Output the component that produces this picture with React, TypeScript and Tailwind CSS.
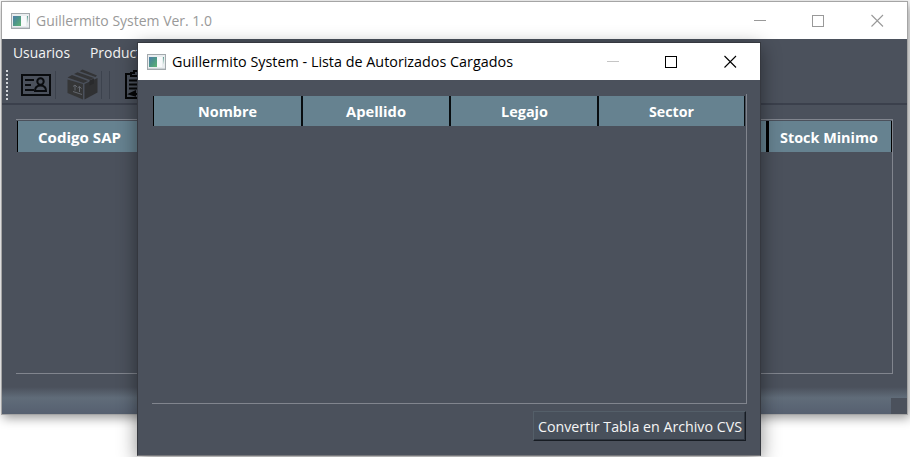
import type { ReactNode } from "react";

function Fit({ w, children, className = "" }: { w: number; children: string; className?: string }) {
  return (
    <svg width={w} height={24} className={"block shrink-0 overflow-visible " + className}>
      <text x={0} y={17} textLength={w} lengthAdjust="spacingAndGlyphs" fill="currentColor">
        {children}
      </text>
    </svg>
  );
}

function AppIcon() {
  return (
    <svg width="19" height="16" viewBox="0 0 19 16" className="shrink-0">
      <defs>
        <linearGradient id="screen" x1="0" y1="0" x2="1" y2="1">
          <stop offset="0" stopColor="#4f7cab" />
          <stop offset="0.5" stopColor="#4d9688" />
          <stop offset="1" stopColor="#5fb472" />
        </linearGradient>
        <linearGradient id="edge" x1="0" y1="0" x2="0" y2="1">
          <stop offset="0" stopColor="#5c9c90" />
          <stop offset="1" stopColor="#dfeae6" />
        </linearGradient>
      </defs>
      <rect x="0.5" y="0.5" width="18" height="15" fill="#e9edef" stroke="#a3a9ad" />
      <rect x="2" y="3" width="8" height="10" fill="url(#screen)" />
      <rect x="10" y="3" width="5" height="10" fill="#f8fafb" />
      <rect x="16" y="3" width="1" height="7" fill="url(#edge)" />
      <path d="M1 14.5h17" stroke="#cdd2d6" />
    </svg>
  );
}

function Controls({ color, minColor }: { color: string; minColor: string }) {
  return (
    <svg width="130" height="14" viewBox="0 0 130 14" fill="none" className="shrink-0" shapeRendering="crispEdges">
      <path d="M0 6.5h12" stroke={minColor} />
      <rect x="58.5" y="1.5" width="11" height="11" stroke={color} />
      <path d="M117.5 1l11.5 11.5M129 1L117.5 12.5" stroke={color} shapeRendering="auto" strokeWidth="1.1" />
    </svg>
  );
}

function TitleBar({ children, className }: { children: ReactNode; className: string }) {
  return <header className={"flex shrink-0 items-center bg-white " + className}>{children}</header>;
}

function Toolbar() {
  return (
    <div className="flex h-[37px] items-start">
      <svg width="6" height="37" className="ml-[3px] shrink-0" shapeRendering="crispEdges">
        <path d="M2 4v31" stroke="#d0d3d7" strokeWidth="2" strokeDasharray="2 2" />
      </svg>
      <svg width="30" height="22" viewBox="0 0 30 22" fill="none" stroke="#090b0e" strokeWidth="2" className="mt-2 ml-[10px] shrink-0">
        <rect x="1" y="1" width="28" height="20" />
        <path d="M4 6h9M4 11h6M4 16h9" strokeWidth="1.8" />
        <circle cx="19.5" cy="7.5" r="3.2" />
        <path d="M14 17c0-4 2-5.500 5.500-5.500S25 13 25 17z" />
      </svg>
      <span className="mt-[5px] ml-[4px] h-7 w-px shrink-0 bg-[#3d434e]" />
      <svg width="31" height="31" viewBox="0 0 31 31" className="mt-[3px] ml-[11px] shrink-0">
        <path d="M0.500 10.500L16 15v15.500L0.500 24z" fill="#353637" />
        <path d="M17.500 15L30.500 9v14.500L17.500 30.500z" fill="#303133" />
        <path d="M0.500 8.500L5 6l16 6-4.500 2zM7 5l3.500-1.800L27 9l-4 2zM12.500 2.300L15.500 0.500 30 6.500 28.500 8z" fill="#333436" />
        <path d="M22.500 11.500l4.500-2v5l-4.500 2z" fill="#292a2c" />
        <path d="M8 21.500V16m-2 1.500L8 16l2 2M12.500 23v-5.500m-2 1.500 2-1.500 2 2.200M6 22.500l9 3" fill="none" stroke="#63676e" />
      </svg>
      <span className="mt-[5px] ml-[3px] h-7 w-px shrink-0 bg-[#3d434e]" />
      <span className="mt-[5px] ml-[7px] h-7 w-px shrink-0 bg-[#3d434e]" />
      <svg width="24" height="30" viewBox="0 0 24 30" fill="none" stroke="#050607" strokeWidth="2" className="mt-[4px] ml-[14px] shrink-0">
        <path d="M7 4H2v24h20V4h-5" />
        <path d="M7 6V3h3V1h4v2h3v3zM5 10.500h14M5 14.500h14M5 18.500h14" />
        <path d="M6 24l5-2.500v4z" fill="#050607" />
        <path d="M11 24h8" />
      </svg>
    </div>
  );
}

function MainWindow() {
  return (
    <section className="mt-px ml-px flex h-[414px] w-[907px] flex-col border border-[#a5a5a5] bg-[#4b515c] shadow-[2px_3px_10px_rgba(0,0,0,0.4)]">
      <TitleBar className="h-[37px] pl-[9px] text-[15px] text-[#999]">
        <AppIcon />
        <Fit w={176} className="ml-[6px]">Guillermito System Ver. 1.0</Fit>
        <span className="ml-auto pr-[23px]"><Controls color="#999" minColor="#999" /></span>
      </TitleBar>
      <nav className="flex h-[27px] items-center gap-5 pt-px pl-[11px] text-[15px] text-[#f4f4f4]">
        <Fit w={57}>Usuarios</Fit>
        <Fit w={66}>Productos</Fit>
      </nav>
      <Toolbar />
      <div className="h-[2px] shrink-0 bg-[#3b404c]" />
      <main className="mt-[14px] mr-[14px] ml-[14px] h-[255px] shrink-0 border-t border-r border-b border-[#81858e]">
        <div className="mt-px ml-px flex h-[31px] border-x border-black bg-[#668290] text-[15px] font-bold text-white">
          <div className="flex w-[751px] items-center border-r-[3px] border-black pt-[2px] pl-[20px]">
            <Fit w={83}>Codigo SAP</Fit>
          </div>
          <div className="flex flex-1 items-center pt-[2px] pl-[11px]">
            <Fit w={98}>Stock Minimo</Fit>
          </div>
        </div>
      </main>
      <footer className="mt-auto flex h-[27px] shrink-0 items-end justify-end bg-linear-to-b from-[#4b515c] via-[#606c79] via-40% to-[#566070]">
        <span className="h-4 w-4 bg-[#4b515c]" />
      </footer>
    </section>
  );
}

function Dialog() {
  const columns: [string, number][] = [["Nombre", 59], ["Apellido", 60], ["Legajo", 47], ["Sector", 45]];
  return (
    <section className="absolute top-[42px] left-[137px] flex h-[414px] w-[624px] flex-col border border-[#35383f] border-b-[#77777b] bg-[#4b515c] shadow-[0_5px_18px_rgba(0,0,0,0.45)]">
      <TitleBar className="h-[37px] pl-[9px] text-[15px] text-black">
        <AppIcon />
        <Fit w={341} className="ml-[6px]">Guillermito System - Lista de Autorizados Cargados</Fit>
        <span className="ml-auto pr-[23px]"><Controls color="#000" minColor="#c5c5c5" /></span>
      </TitleBar>
      <main className="mt-[14px] mr-[13px] ml-[14px] h-[310px] shrink-0 border-r border-b border-[#81858e]">
        <div className="mt-[2px] mr-px ml-px grid h-[30px] grid-cols-[149px_148px_148px_1fr] border-l border-black bg-[#668290] text-[15px] font-bold text-white">
          {columns.map(([name, w]) => (
            <div key={name} className="flex items-center justify-center border-r-2 border-[#080d10] pt-[2px] last:border-r">
              <Fit w={w}>{name}</Fit>
            </div>
          ))}
        </div>
      </main>
      <button className="mt-[7px] mr-[14px] flex h-[30px] w-[213px] shrink-0 items-center self-end border border-t-[#545f69] border-r-[#171c23] border-b-[#171c23] border-l-[#545f69] bg-[#48505b] pt-px pl-1 text-[15px] text-[#f5f5f5] shadow-[inset_-1px_-1px_0_#303741]">
        <Fit w={204}>Convertir Tabla en Archivo CVS</Fit>
      </button>
    </section>
  );
}

export default function App() {
  return (
    <div className="relative flex h-[457px] w-[910px] items-start overflow-hidden bg-white font-['Open_Sans','Noto_Sans',sans-serif]">
      <MainWindow />
      <Dialog />
    </div>
  );
}
